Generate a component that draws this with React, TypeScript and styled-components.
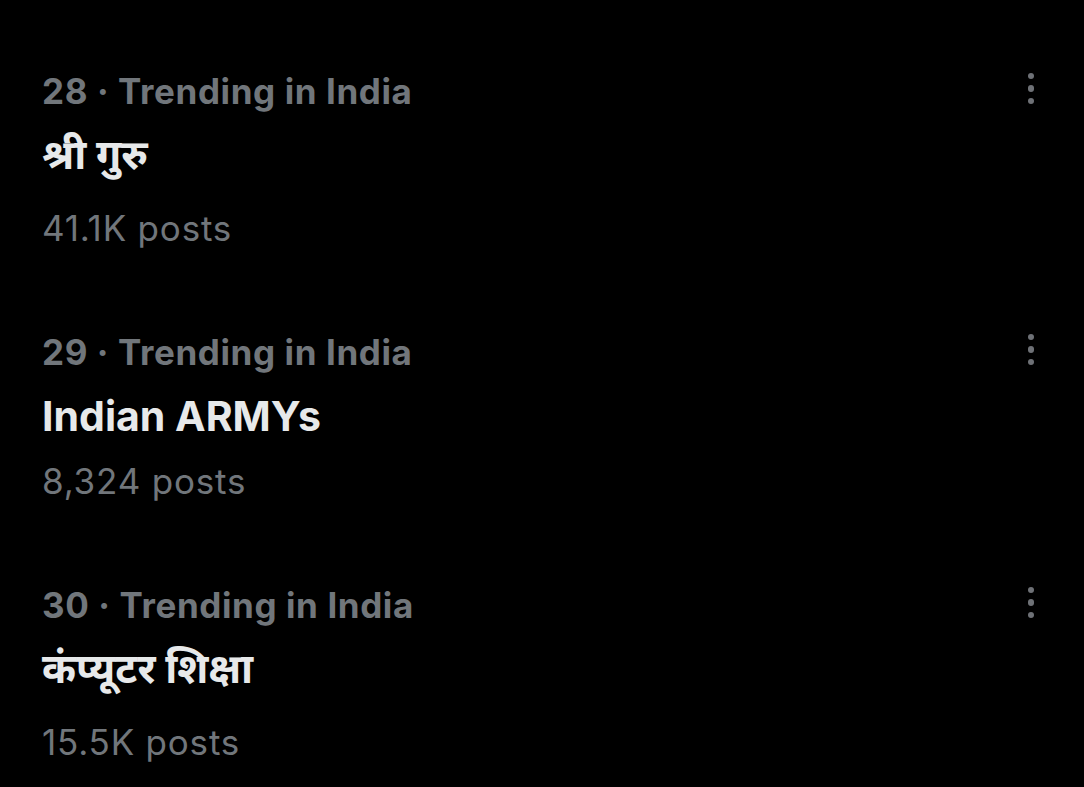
import React from "react";
import styled, { createGlobalStyle } from "styled-components";

interface TrendProps {
  rank: number;
  title: string;
  posts: string;
  devanagari?: boolean;
}

const GlobalStyle = createGlobalStyle`
  html, body {
    margin: 0;
    padding: 0;
    background: #000000;
  }
  body {
    font-family: Inter, "Noto Sans Devanagari", "Noto Sans", sans-serif;
    -webkit-font-smoothing: antialiased;
  }
`;

const Page = styled.div`
  width: 1084px;
  height: 787px;
  background: #000000;
  padding: 71px 0 0 42px;
  box-sizing: border-box;
  overflow: hidden;
`;

const List = styled.div`
  display: flex;
  flex-direction: column;
  gap: 84px;
`;

const Item = styled.div`
  display: flex;
  flex-direction: column;
  padding-right: 49px;
`;

const Header = styled.div`
  display: flex;
  justify-content: space-between;
  align-items: center;
  height: 40px;
`;

const Meta = styled.span`
  font-size: 35px;
  line-height: 40px;
  font-weight: 700;
  letter-spacing: 0.6px;
  color: #71767b;
`;

const Title = styled.div<{ $tall?: boolean }>`
  margin-top: ${(p) => (p.$tall ? "18px" : "19px")};
  margin-bottom: ${(p) => (p.$tall ? "9px" : "0")};
  font-size: 41px;
  line-height: 50px;
  font-weight: 700;
  color: #e7e9ea;
`;

const Posts = styled.div`
  margin-top: 20px;
  font-size: 35px;
  line-height: 40px;
  font-weight: 400;
  letter-spacing: 0.8px;
  color: #71767b;
`;

const MoreButton = styled.div`
  display: flex;
  flex-direction: column;
  align-items: center;
  gap: 6px;
  width: 8px;
  margin-top: -5px;
`;

const Dot = styled.span`
  width: 6.5px;
  height: 6.5px;
  border-radius: 50%;
  background: #6e7176;
`;

const TrendItem = ({ rank, title, posts, devanagari }: TrendProps): React.ReactElement => {
  return (
    <Item>
      <Header>
        <Meta>{rank} · Trending in India</Meta>
        <MoreButton>
          <Dot />
          <Dot />
          <Dot />
        </MoreButton>
      </Header>
      <Title $tall={devanagari}>{title}</Title>
      <Posts>{posts}</Posts>
    </Item>
  );
};

const trends: TrendProps[] = [
  { rank: 28, title: "श्री गुरु", posts: "41.1K posts", devanagari: true },
  { rank: 29, title: "Indian ARMYs", posts: "8,324 posts" },
  { rank: 30, title: "कंप्यूटर शिक्षा", posts: "15.5K posts", devanagari: true },
];

const App = (): React.ReactElement => {
  return (
    <>
      <GlobalStyle />
      <Page>
        <List>
          {trends.map((t) => (
            <TrendItem key={t.rank} {...t} />
          ))}
        </List>
      </Page>
    </>
  );
};

export default App;
